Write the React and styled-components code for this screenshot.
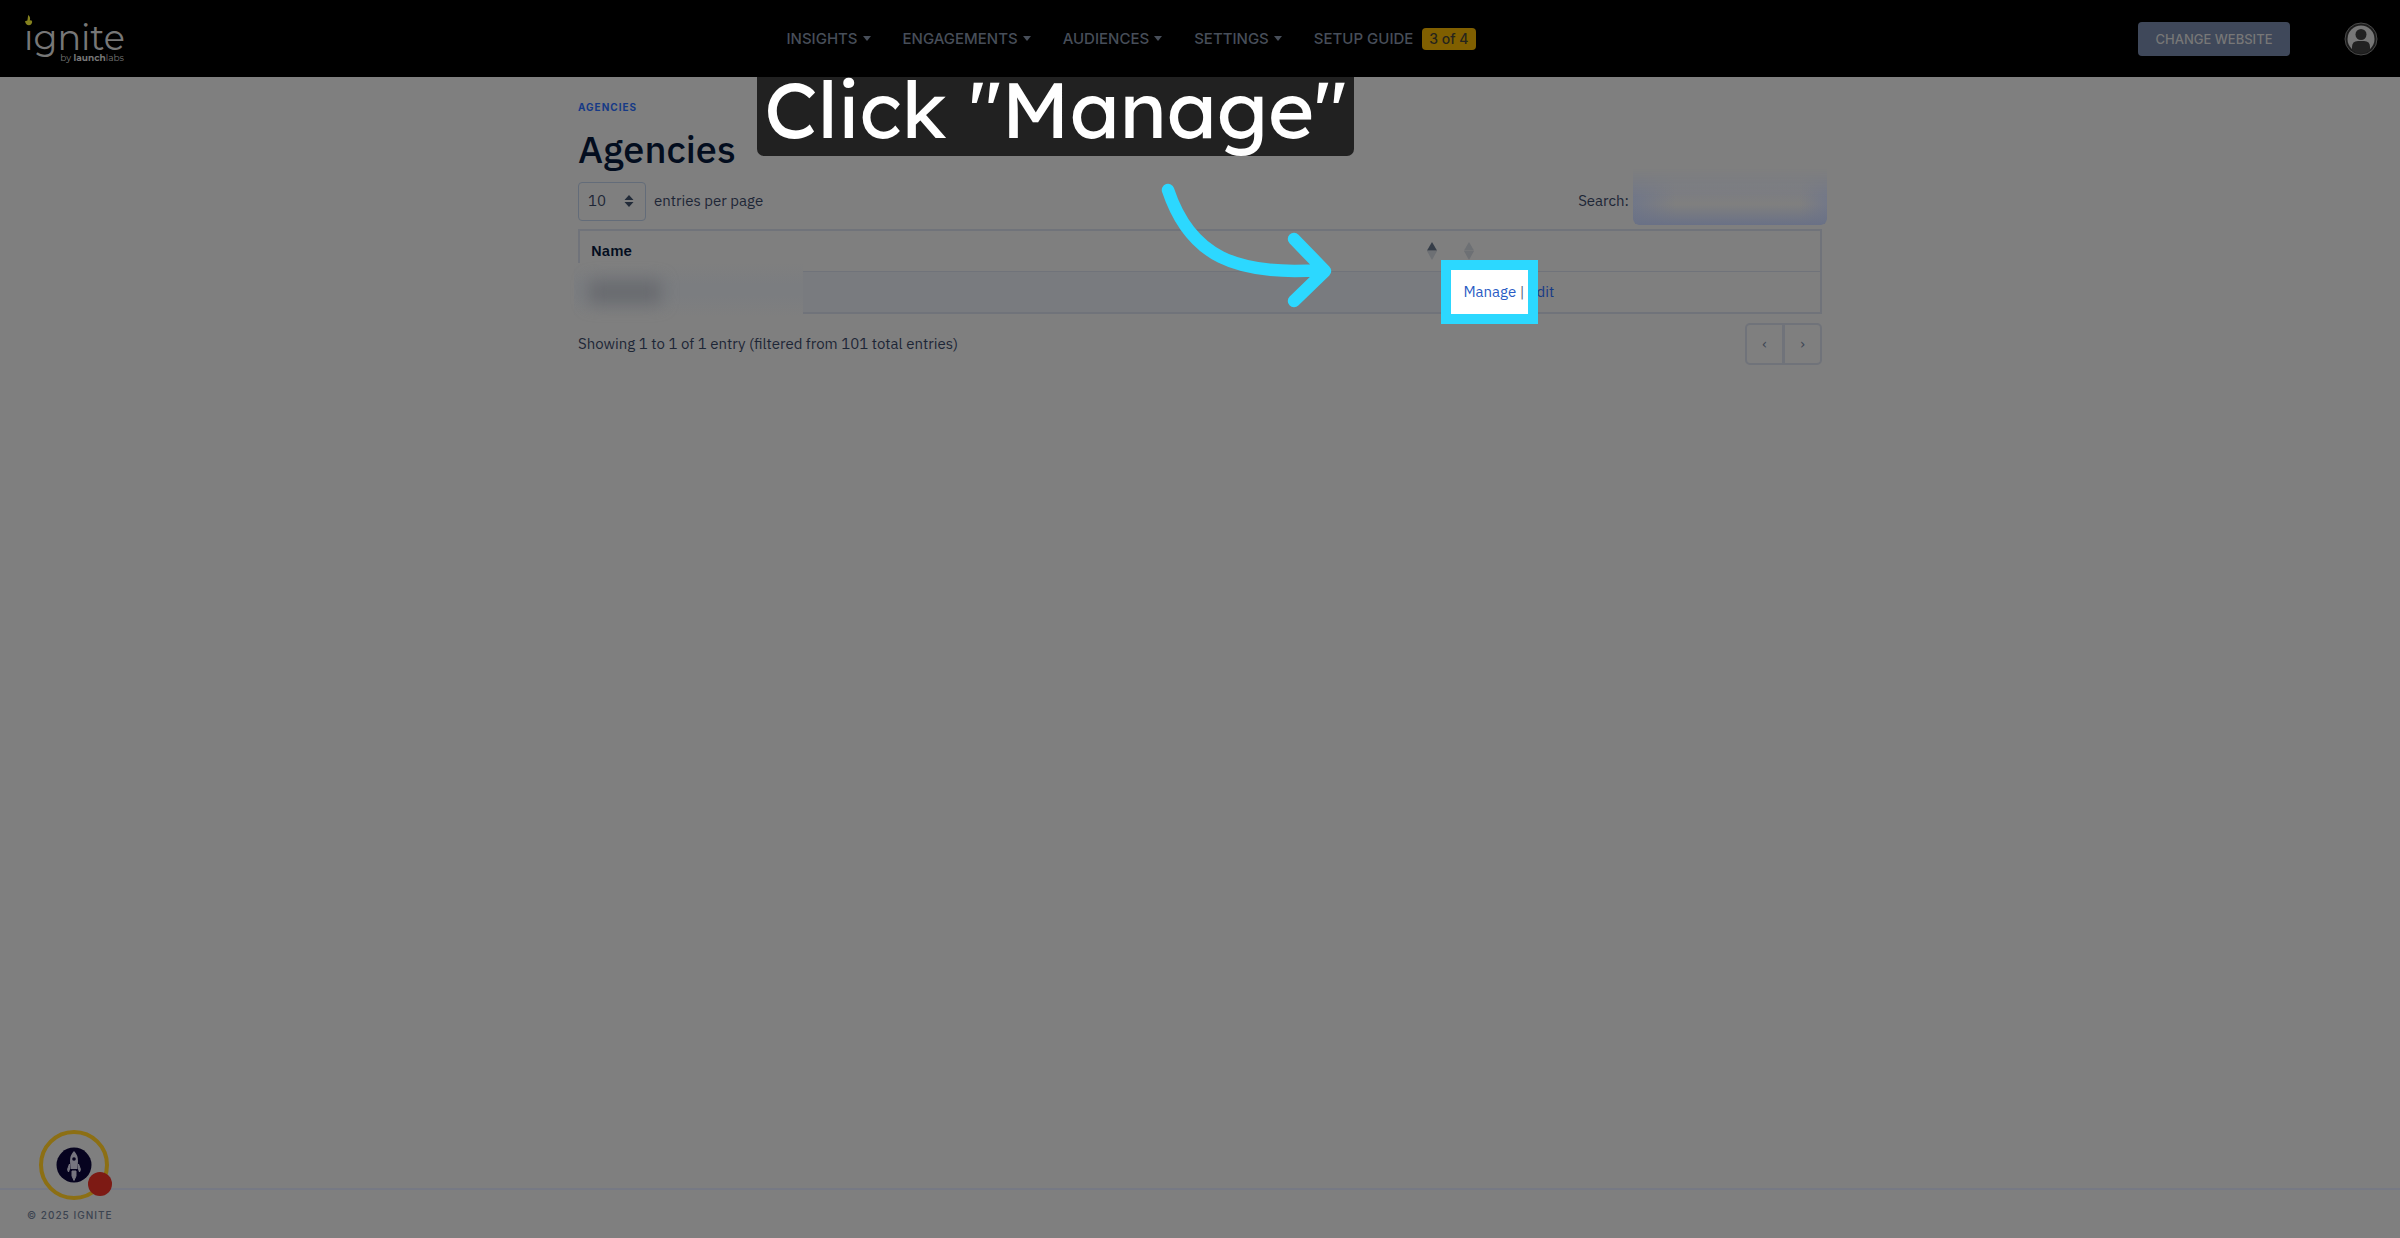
import React from "react";
import styled, { createGlobalStyle } from "styled-components";

const plex = `"IBM Plex Sans", Roboto, "Liberation Sans", sans-serif`;
const inter = `Inter, "Liberation Sans", sans-serif`;
const line = "#70737a";

const Global = createGlobalStyle`
  *, *::before, *::after { box-sizing: border-box; }
  body { margin: 0; background: #7f7f7f; color: #1d2636; font: 15px/24px ${plex}; }
  a { color: inherit; text-decoration: none; }
  button, select, input { font: inherit; color: inherit; }
`;
const Page = styled.div`
  min-height: 100vh;
  display: flex;
  flex-direction: column;
`;
const Header = styled.header`
  height: 77px;
  background: #000;
  display: flex;
  justify-content: space-between;
  align-items: center;
  padding: 0 22px 0 24px;
  font-family: ${inter};
`;
const Brand = styled.a`
  position: relative;
  width: 100px;
  height: 50px;
  color: #777;
`;
const Word = styled.span`
  display: block;
  padding-top: 2px;
  font: 400 35px/44px Montserrat, ${inter};
`;
const Flame = styled.svg`
  position: absolute;
  left: 1px;
  top: 0;
`;
const Byline = styled.span`
  position: absolute;
  right: 0;
  bottom: 0;
  font: 400 9px/12px Montserrat, ${inter};
  white-space: nowrap;
`;
const Nav = styled.nav`
  display: flex;
  align-items: center;
  gap: 32px;
  color: #474e59;
  font-weight: 500;
  font-size: 15px;
`;
const NavLink = styled.a`
  display: flex;
  align-items: center;
  gap: 5px;
  white-space: nowrap;
`;
const Caret = styled.span`
  border: 4px solid transparent;
  border-top: 5px solid #474e59;
  border-bottom: 0;
`;
const Badge = styled.span`
  background: #805f00;
  color: #26241c;
  border-radius: 4px;
  padding: 0 7px;
  margin-left: 4px;
  font-size: 14px;
  line-height: 22px;
`;
const Account = styled.div`
  display: flex;
  align-items: center;
  gap: 54px;
`;
const Change = styled.button`
  background: #3f485a;
  color: #777;
  border: 0;
  border-radius: 4px;
  width: 152px;
  height: 34px;
  padding: 0;
  font-size: 13px;
  font-weight: 500;
`;
const Avatar = styled.button`
  border: 0;
  padding: 0;
  background: none;
  height: 34px;
  width: 34px;
`;
const Main = styled.main`
  position: relative;
  width: 1244px;
  max-width: 100%;
  margin: 0 auto;
  padding-top: 20px;
  flex: 1;
`;
const Crumb = styled.a`
  display: block;
  color: #163a86 !important;
  font: 700 10px/20px ${inter};
  letter-spacing: 1px;
`;
const Title = styled.h1`
  margin: 8px 0;
  font: 500 38px/48px ${plex};
  color: #030d1e;
`;
const Tools = styled.div`
  display: flex;
  justify-content: space-between;
  align-items: center;
  height: 40px;
  margin-bottom: 8px;
`;
const Length = styled.div`
  display: flex;
  align-items: center;
  gap: 8px;
`;
const SelectBox = styled.span`
  display: grid;
  grid-template-columns: 1fr auto;
  align-items: center;
  width: 68px;
  height: 39px;
  border: 1px solid #636c79;
  border-radius: 4px;
  padding-right: 11px;
`;
const Select = styled.select`
  appearance: none;
  border: 0;
  background: none;
  padding: 0 0 0 9px;
  width: 100%;
`;
const Search = styled.div`
  display: flex;
  align-items: center;
  gap: 4px;
  margin-right: -5px;
`;
const Input = styled.input`
  border: 0;
  width: 194px;
  height: 56px;
  margin-top: -8px;
  border-radius: 0 0 6px 6px;
  background:
    linear-gradient(to top, #6a7186, transparent 36%),
    linear-gradient(to right, #717788, transparent 22%, transparent 86%, #737888),
    linear-gradient(#767b87, #7c7d82 45%, #7f7f7f 60%);
  mask-image: linear-gradient(transparent, #000 50%);
`;
const Table = styled.table`
  width: 100%;
  border-collapse: collapse;
  border: 2px solid ${line};
  table-layout: fixed;
`;
const NameCol = styled.col`
  width: 70%;
`;
const Th = styled.th`
  height: 41px;
  padding: 0 ${(p) => (p.$narrow ? "16px" : "11px")};
  text-align: left;
  font-weight: 600;
  color: #030d1e;
`;
const Td = styled.td`
  height: 42px;
  padding: 0 15px;
  border-top: 1px solid ${line};
  background: ${(p) => (p.$sorted ? "#797b7f" : "transparent")};
`;
const ThInner = styled.span`
  display: flex;
  align-items: center;
  justify-content: ${(p) => (p.$narrow ? "flex-start" : "space-between")};
`;
const Link = styled.a`
  color: ${(p) => (p.$lit ? "#2a5cc4" : "#163a86")} !important;
`;
const Lit = styled.span`
  position: relative;
  z-index: 1;
  display: inline-block;
  color: #50607a;
  &::before {
    content: "";
    position: absolute;
    z-index: -1;
    left: -22px;
    top: -20px;
    width: 97px;
    height: 64px;
    border: 10px solid #2cd8ff;
    background: #fff;
  }
`;
const Foot = styled.div`
  display: flex;
  justify-content: space-between;
  align-items: center;
  margin-top: 9px;
`;
const Pager = styled.div`
  display: flex;
`;
const PageButton = styled.button`
  width: 39px;
  height: 42px;
  border: 2px solid ${line};
  background: none;
  padding: 0;
  color: #3f4856;
  border-radius: ${(p) => (p.$last ? "0 5px 5px 0" : "5px 0 0 5px")};
  margin-left: ${(p) => (p.$last ? "-1px" : "0")};
`;
const Footer = styled.footer`
  border-top: 2px solid #767984;
  height: 50px;
  padding: 15px 27px;
  font: 500 10px/20px ${inter};
  letter-spacing: 1px;
  color: #3b4350;
`;
const Launcher = styled.button`
  position: fixed;
  left: 38px;
  bottom: 37px;
  width: 75px;
  height: 72px;
  border: 0;
  padding: 0;
  background: none;
`;
const Redacted = styled.span`
  position: absolute;
  left: -4px;
  top: 186px;
  width: 229px;
  height: 54px;
  background: linear-gradient(#7f7f7f, #7b7d80 40%, #7b7d80 60%, #7f7f7f);
  &::before {
    content: "";
    position: absolute;
    left: 15px;
    top: 17px;
    width: 72px;
    height: 24px;
    background: #696b6f;
    filter: blur(8px);
  }
`;
const Caption = styled.div`
  position: absolute;
  left: 179px;
  top: 0;
  width: 597px;
  height: 79px;
  background: #212121;
  color: #fff;
  border-radius: 0 0 7px 7px;
  text-align: center;
  white-space: nowrap;
  font: 400 79px/64px Lexend, ${inter};
`;
const Arrow = styled.svg`
  position: absolute;
  left: 582px;
  top: 103px;
  overflow: visible;
`;

function Sorter({ asc }) {
  return (
    <svg width="10" height="20" viewBox="0 0 10 20">
      <path d="M5 1L10 9.500H0Z" fill={asc ? "#353d48" : "#6d7074"} />
      <path d="M0 10H10L5 19Z" fill="#6d7074" />
    </svg>
  );
}

export default function App() {
  return (
    <>
      <Global />
      <Page>
        <Header>
          <Brand href="#" aria-label="ignite">
            <Word>ıgnite</Word>
            <Flame width="8" height="13" viewBox="0 0 10 14">
              <path d="M4 0C6 1 7 4 6 7Q9 6 9 9Q8 13 5 13Q1 13 0 8L3 7Z" fill="#85821e" />
            </Flame>
            <Byline>by <b>launch</b>labs</Byline>
          </Brand>
          <Nav>
            {["INSIGHTS", "ENGAGEMENTS", "AUDIENCES", "SETTINGS"].map((n) => (
              <NavLink href="#" key={n}>{n}<Caret /></NavLink>
            ))}
            <NavLink href="#">SETUP GUIDE <Badge>3 of 4</Badge></NavLink>
          </Nav>
          <Account>
            <Change>CHANGE WEBSITE</Change>
            <Avatar aria-label="Account">
              <svg width="34" height="34" viewBox="0 0 34 34">
                <circle cx="17" cy="17" r="16" fill="#1c1c1c" stroke="#4a4a4a" />
                <circle cx="17" cy="17" r="13.5" fill="#777" />
                <circle cx="17" cy="12.5" r="5.5" fill="#222" />
                <path d="M8 28V25Q8 19 14 19H20Q26 19 26 25V28Q17 35 8 28Z" fill="#222" />
              </svg>
            </Avatar>
          </Account>
        </Header>
        <Main>
          <Crumb href="#">AGENCIES</Crumb>
          <Title>Agencies</Title>
          <Tools>
            <Length>
              <SelectBox>
                <Select id="length"><option>10</option></Select>
                <svg width="10" height="12" viewBox="0 0 10 12">
                  <path d="M5 0L9.500 5H.5ZM.5 7H9.500L5 12Z" fill="#222b39" />
                </svg>
              </SelectBox>
              <label htmlFor="length">entries per page</label>
            </Length>
            <Search>
              <label htmlFor="search">Search:</label>
              <Input id="search" />
            </Search>
          </Tools>
          <Table>
            <colgroup><NameCol /><col /></colgroup>
            <thead>
              <tr>
                <Th><ThInner>Name<Sorter asc /></ThInner></Th>
                <Th $narrow><ThInner $narrow><Sorter /></ThInner></Th>
              </tr>
            </thead>
            <tbody>
              <tr>
                <Td $sorted />
                <Td>
                  <Lit><Link $lit href="#">Manage</Link> |</Lit> <Link href="#">Edit</Link>
                </Td>
              </tr>
            </tbody>
          </Table>
          <Foot>
            <span>Showing 1 to 1 of 1 entry (filtered from 101 total entries)</span>
            <Pager>
              <PageButton aria-label="Previous">‹</PageButton>
              <PageButton $last aria-label="Next">›</PageButton>
            </Pager>
          </Foot>
          <Redacted />
          <Caption>Click "Manage"</Caption>
          <Arrow width="172" height="128" viewBox="0 0 172 128" fill="none" stroke="#2cd8ff" strokeWidth="12.5" strokeLinecap="round" strokeLinejoin="round">
            <path d="M8 10C30 76 76 96 160 90M134 59L165 91L134 121" />
          </Arrow>
        </Main>
        <Footer>© 2025 IGNITE</Footer>
        <Launcher aria-label="Open launcher">
          <svg width="75" height="72" viewBox="0 0 75 72">
            <circle cx="36" cy="36" r="33" stroke="#8c6f14" strokeWidth="4" fill="#7f7f7f" />
            <circle cx="36" cy="36" r="17.500" fill="#06031f" />
            <path d="M36 22Q40 26 40 32L39.500 40H32.500L32 32Q32 26 36 22Z" fill="#76757f" />
            <path d="M31.500 35V40L30.500 43L29.500 40.500ZM40.500 35V40L41.500 43L42.500 40.500ZM34 42H38V47L36 51.500L34 47Z" stroke="#76757f" fill="#76757f" />
            <circle cx="36" cy="30" r="1.800" fill="#06031f" />
            <circle cx="62" cy="55" r="12" fill="#7d1a14" />
          </svg>
        </Launcher>
      </Page>
    </>
  );
}
